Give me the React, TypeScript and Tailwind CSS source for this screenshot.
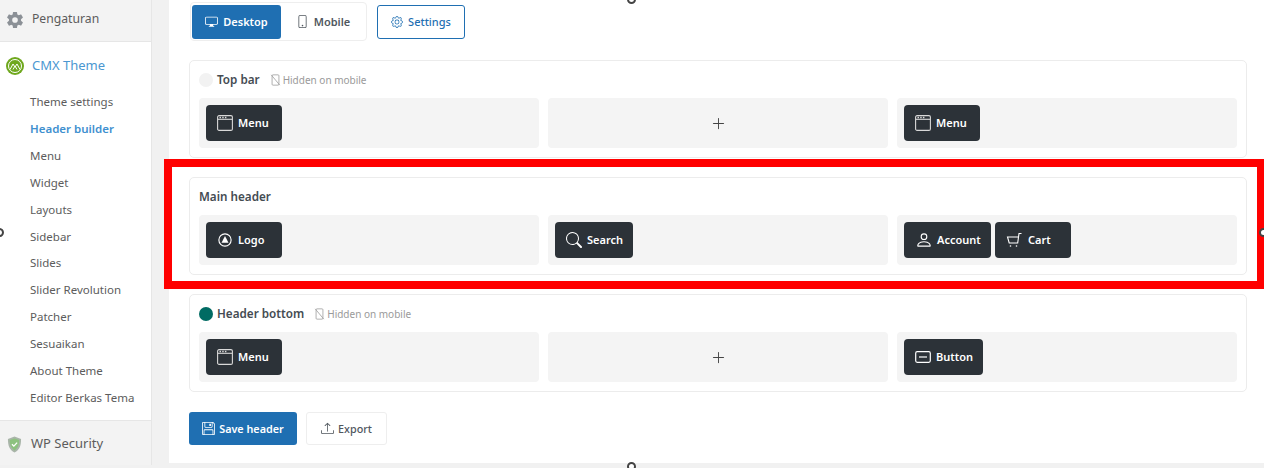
import { ReactNode } from 'react';
import { BsDisplay, BsFloppy, BsGear, BsPerson, BsPhone, BsPlusLg, BsSearch, BsUpload } from 'react-icons/bs';
import { IoSettingsSharp } from 'react-icons/io5';

const submenu = [
  'Theme settings',
  'Header builder',
  'Menu',
  'Widget',
  'Layouts',
  'Sidebar',
  'Slides',
  'Slider Revolution',
  'Patcher',
  'Sesuaikan',
  'About Theme',
  'Editor Berkas Tema',
];

function CmxIcon() {
  return (
    <svg viewBox="0 0 18 18" className="w-[18px] h-[18px]">
      <circle cx="9" cy="9" r="9" fill="#6fa81e" />
      <circle cx="9" cy="9" r="6.5" fill="none" stroke="#fff" strokeWidth="1" />
      <path d="M4 12.5 7 7l2 3 2-3 3 5.500M7 12.500 9 9l2 3.500" fill="none" stroke="#fff" strokeWidth="1" />
    </svg>
  );
}

function ShieldIcon() {
  return (
    <svg viewBox="0 0 16 18" className="w-[15px] h-[17px]">
      <path d="M8 .5 15 3c0 7-1.500 11.500-7 14.500C2.500 14.500 1 10 1 3z" fill="#a9b5a9" />
      <path d="M8 2.500 13 4.300c0 5-1.200 8.500-5 11-3.800-2.500-5-6-5-11z" fill="#8dc27f" />
      <path d="m5.300 8.700 2 2 3.500-3.700" fill="none" stroke="#fff" strokeWidth="1.400" />
    </svg>
  );
}

function HiddenPhone() {
  return (
    <svg viewBox="0 0 12 14" className="w-[11px] h-[12px] text-[#9a9a9a]" fill="none" stroke="currentColor" strokeWidth="0.9">
      <rect x="2" y="1" width="8" height="12" rx="1" />
      <path d="M1 1l10 12" />
    </svg>
  );
}

function WindowIcon() {
  return (
    <svg viewBox="0 0 16 16" className="w-[16px] h-[16px] text-[#d8d8d8]" fill="none" stroke="currentColor" strokeWidth="1.100">
      <rect x="0.600" y="0.600" width="14.800" height="14.800" rx="1.500" />
      <path d="M1 4.300h14" />
      <path d="M2.500 2.500h1.500M5.200 2.500h1.500M7.900 2.500h1.500" strokeWidth="1.300" />
    </svg>
  );
}

function LogoIcon() {
  return (
    <svg viewBox="0 0 16 16" className="w-[14px] h-[14px] ml-[1px] mr-[1px]" fill="none" stroke="currentColor" strokeWidth="1.300">
      <circle cx="8" cy="8" r="7" />
      <path d="M8 3.500 12 11H4z" fill="currentColor" stroke="none" />
    </svg>
  );
}

function CartIcon() {
  return (
    <svg viewBox="0 0 16 16" className="w-[16px] h-[16px]" fill="none" stroke="currentColor" strokeWidth="1.100">
      <path d="M15.500 1.500H13L11.700 11H3.200L1.500 5h11" />
      <circle cx="4.500" cy="14" r="0.800" fill="currentColor" stroke="none" />
      <circle cx="10.500" cy="14" r="0.800" fill="currentColor" stroke="none" />
    </svg>
  );
}

function ButtonIcon() {
  return (
    <svg viewBox="0 0 16 12" className="w-[16px] h-[12px]" fill="none" stroke="currentColor" strokeWidth="1.200">
      <rect x="0.700" y="0.700" width="14.600" height="10.600" rx="1.500" />
      <path d="M4 6h8" />
    </svg>
  );
}

function Widget({ icon, label, width, gap = 'gap-[5px]' }: { icon: ReactNode; label: string; width: string; gap?: string }) {
  return (
    <div className={`${width} ${gap} h-[36px] bg-[#2c3238] rounded-[4px] flex items-center pl-[11px] text-white text-[11px] font-semibold`}>
      {icon}
      <span className="pt-[1px]">{label}</span>
    </div>
  );
}

function Cell({ children }: { children?: ReactNode }) {
  return <div className="h-[50px] bg-[#f4f4f4] rounded-[4px] p-[7px] flex gap-[4px]">{children}</div>;
}

function PlusCell() {
  return (
    <div className="h-[50px] pt-[1px] bg-[#f4f4f4] rounded-[4px] flex items-center justify-center text-[#444]">
      <BsPlusLg size={15} />
    </div>
  );
}

function Row({ title, dot, hidden, children }: { title: string; dot?: string; hidden?: boolean; children: ReactNode }) {
  return (
    <section className="h-[98px] border border-[#ececec] rounded-[5px] px-[9px] pt-[9px]">
      <div className="h-[20px] flex items-center mb-[8px]">
        {dot && <span className={`${dot} w-[14px] h-[14px] rounded-full mr-[4px]`} />}
        <h3 className="text-[11.700px] font-semibold text-[#444b52]">{title}</h3>
        {hidden && (
          <span className="ml-[10px] flex items-center gap-[2px] text-[10px] text-[#9a9a9a]">
            <HiddenPhone />
            Hidden on mobile
          </span>
        )}
      </div>
      <div className="grid grid-cols-3 gap-[9px]">{children}</div>
    </section>
  );
}

function Handle({ className }: { className: string }) {
  return <span className={`${className} absolute w-[9px] h-[9px] rounded-full bg-white border-2 border-[#444]`} />;
}

export default function App() {
  return (
    <div className="relative h-[468px] w-[1264px] overflow-hidden bg-[#f1f1f1] flex font-['Noto_Sans',sans-serif]">
      <aside className="w-[152px] h-[465px] shrink-0 border-r border-[#e6e6e6] flex flex-col text-[#5c5c5c]">
        <div className="h-[42px] pb-[2px] bg-[#f3f3f3] border-b border-[#e6e6e6] flex items-center pl-[6px] gap-[8px] text-[12.200px] shrink-0">
          <IoSettingsSharp size={18} className="text-[#8b9096]" />
          Pengaturan
        </div>
        <div className="flex-1 bg-white">
          <div className="h-[46px] pt-[2px] flex items-center pl-[6px] gap-[8px] text-[13px] text-[#4b97d1]">
            <CmxIcon />
            CMX Theme
          </div>
          <ul className="pt-[0.500px] pl-[30px] text-[11.500px]">
            {submenu.map((item) => (
              <li key={item} className={`h-[26.850px] flex items-center ${item === 'Header builder' ? 'font-semibold text-[#3f90cf]' : ''}`}>
                {item}
              </li>
            ))}
          </ul>
        </div>
        <div className="h-[45px] pt-[2px] bg-[#f3f3f3] border-t border-[#e6e6e6] flex items-center pl-[7px] gap-[9px] text-[13px] shrink-0">
          <ShieldIcon />
          WP Security
        </div>
      </aside>

      <main className="ml-[17px] flex-1 h-[463px] bg-white pl-[20px] pr-[17px] pt-[2px]">
        <div className="h-[39px] flex items-center gap-[10px]">
          <div className="h-[39px] w-[177px] ml-[1px] border border-[#eeeeee] rounded-[4px] p-[1px] flex items-center text-[11px] font-semibold">
            <div className="w-[89px] h-[34px] bg-[#1f6fb2] rounded-[3px] text-white flex items-center justify-center gap-[5px]">
              <BsDisplay size={13} />
              <span className="pt-[1px]">Desktop</span>
            </div>
            <div className="flex-1 h-[34px] text-[#50575e] flex items-center justify-center gap-[5px]">
              <BsPhone size={13} />
              <span className="pt-[1px]">Mobile</span>
            </div>
          </div>
          <div className="w-[88px] h-[34px] border border-[#1f6fb2] rounded-[3px] text-[#1f6fb2] flex items-center justify-center gap-[5px] text-[11px] font-medium">
            <BsGear size={12} />
            <span className="pt-[1px]">Settings</span>
          </div>
        </div>

        <div className="mt-[19px] flex flex-col gap-[19px]">
          <Row title="Top bar" dot="bg-[#f2f2f2]" hidden>
            <Cell>
              <Widget icon={<WindowIcon />} label="Menu" width="w-[76px]" />
            </Cell>
            <PlusCell />
            <Cell>
              <Widget icon={<WindowIcon />} label="Menu" width="w-[76px]" />
            </Cell>
          </Row>
          <Row title="Main header">
            <Cell>
              <Widget icon={<LogoIcon />} label="Logo" width="w-[76px]" />
            </Cell>
            <Cell>
              <Widget icon={<BsSearch size={16} />} label="Search" width="w-[78px]" gap="gap-[5px]" />
            </Cell>
            <Cell>
              <Widget icon={<BsPerson size={18} />} label="Account" width="w-[87px]" gap="gap-[4px]" />
              <Widget icon={<CartIcon />} label="Cart" width="w-[76px]" gap="gap-[6px]" />
            </Cell>
          </Row>
          <Row title="Header bottom" dot="bg-[#006b63]" hidden>
            <Cell>
              <Widget icon={<WindowIcon />} label="Menu" width="w-[76px]" />
            </Cell>
            <PlusCell />
            <Cell>
              <Widget icon={<ButtonIcon />} label="Button" width="w-[79px]" />
            </Cell>
          </Row>
        </div>

        <div className="mt-[20px] flex gap-[9px] text-[10.800px] font-semibold">
          <div className="w-[108px] h-[33px] bg-[#1f6fb2] rounded-[3px] text-white flex items-center justify-center gap-[4px]">
            <BsFloppy size={13} />
            <span className="pt-[1px]">Save header</span>
          </div>
          <div className="w-[81px] h-[33px] border border-[#eeeeee] rounded-[3px] text-[#50575e] font-medium flex items-center justify-center gap-[4px]">
            <BsUpload size={13} />
            <span className="pt-[1px]">Export</span>
          </div>
        </div>
      </main>

      {/* annotation drawn over the screenshot */}
      <div className="absolute left-[164px] top-[159px] w-[1100px] h-[130px] border-8 border-r-[7px] border-[#ff0000] pointer-events-none" />
      <Handle className="left-[627px] top-[-5px]" />
      <Handle className="left-[627px] top-[462px]" />
      <Handle className="left-[-5px] top-[228px]" />
      <Handle className="left-[1259px] top-[228px]" />
    </div>
  );
}
